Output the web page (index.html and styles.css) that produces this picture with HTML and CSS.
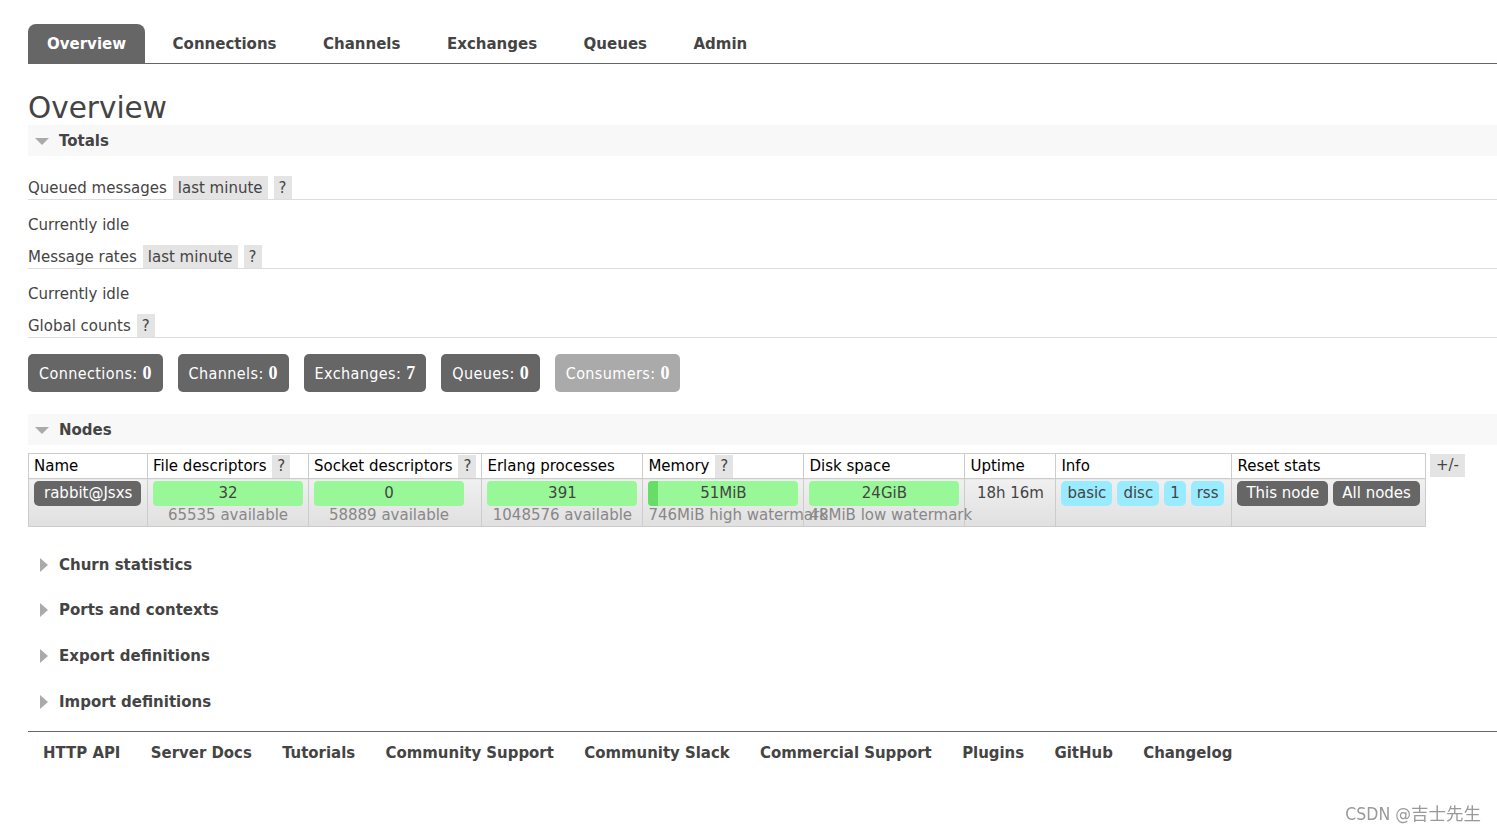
FILE: index.html
```html
<!DOCTYPE html>
<html>
<head>
<meta charset="utf-8">
<title>RabbitMQ Management</title>
<link rel="stylesheet" href="styles.css">
</head>
<body>
<div class="page">
  <ul class="tabs">
    <li class="tab active">Overview</li>
    <li class="tab">Connections</li>
    <li class="tab">Channels</li>
    <li class="tab">Exchanges</li>
    <li class="tab">Queues</li>
    <li class="tab">Admin</li>
  </ul>

  <h1 class="title">Overview</h1>

  <div class="section-head open"><span class="tri-down"></span>Totals</div>

  <div class="row-line"><span class="lbl">Queued messages</span><span class="chip">last minute</span><span class="chip q">?</span></div>
  <div class="idle">Currently idle</div>
  <div class="row-line"><span class="lbl">Message rates</span><span class="chip">last minute</span><span class="chip q">?</span></div>
  <div class="idle">Currently idle</div>
  <div class="row-line"><span class="lbl">Global counts</span><span class="chip q">?</span></div>

  <div class="counts">
    <span class="count">Connections: <b>0</b></span>
    <span class="count">Channels: <b>0</b></span>
    <span class="count">Exchanges: <b>7</b></span>
    <span class="count">Queues: <b>0</b></span>
    <span class="count light">Consumers: <b>0</b></span>
  </div>

  <div class="section-head nodes"><span class="tri-down"></span>Nodes</div>

  <div class="table-wrap">
    <table class="list">
      <thead>
        <tr>
          <th class="c-name">Name</th>
          <th class="c-fd">File descriptors <span class="th-q">?</span></th>
          <th class="c-sd">Socket descriptors <span class="th-q">?</span></th>
          <th class="c-ep">Erlang processes</th>
          <th class="c-mem">Memory <span class="th-q">?</span></th>
          <th class="c-disk">Disk space</th>
          <th class="c-up">Uptime</th>
          <th class="c-info">Info</th>
          <th class="c-reset">Reset stats</th>
        </tr>
      </thead>
      <tbody>
        <tr>
          <td><span class="node">rabbit@Jsxs</span></td>
          <td><div class="bar"><span class="bar-val">32</span></div><div class="sub">65535 available</div></td>
          <td><div class="bar"><span class="bar-val">0</span></div><div class="sub">58889 available</div></td>
          <td><div class="bar"><span class="bar-val">391</span></div><div class="sub">1048576 available</div></td>
          <td><div class="bar"><span class="bar-dark" style="width:10px"></span><span class="bar-val">51MiB</span></div><div class="sub">746MiB high watermark</div></td>
          <td><div class="bar"><span class="bar-val">24GiB</span></div><div class="sub">48MiB low watermark</div></td>
          <td class="uptime">18h 16m</td>
          <td><div class="badges"><span class="badge">basic</span><span class="badge">disc</span><span class="badge">1</span><span class="badge">rss</span></div></td>
          <td><div class="badges"><span class="btn">This node</span><span class="btn">All nodes</span></div></td>
        </tr>
      </tbody>
    </table>
    <span class="plusminus">+/-</span>
  </div>

  <div class="section-head closed first"><span class="tri-right"></span>Churn statistics</div>
  <div class="section-head closed"><span class="tri-right"></span>Ports and contexts</div>
  <div class="section-head closed"><span class="tri-right"></span>Export definitions</div>
  <div class="section-head closed"><span class="tri-right"></span>Import definitions</div>

  <ul class="footer">
    <li>HTTP API</li>
    <li>Server Docs</li>
    <li>Tutorials</li>
    <li>Community Support</li>
    <li>Community Slack</li>
    <li>Commercial Support</li>
    <li>Plugins</li>
    <li>GitHub</li>
    <li>Changelog</li>
  </ul>
</div>
<div class="watermark">CSDN @吉士先生</div>
</body>
</html>
```

FILE: styles.css
```css
html, body {
  margin: 0;
  padding: 0;
  background: #fff;
}
body {
  font-family: "DejaVu Sans", Verdana, sans-serif;
  font-size: 15px;
  color: #444;
}
.page {
  padding: 24px 0 0 28px;
}
.tabs {
  list-style: none;
  margin: 0;
  padding: 0;
  display: flex;
  height: 39px;
  border-bottom: 1px solid #666;
}
.tab {
  font-weight: bold;
  color: #444;
  padding: 2px 19px 0;
  margin-right: 8.5px;
  line-height: 37px;
  font-size: 15px;
}
.tab.active {
  background: #666;
  color: #fff;
  border-radius: 8px 8px 0 0;
}
.title {
  margin: 28px 0 0;
  font-size: 29.5px;
  font-weight: normal;
  line-height: 33px;
  color: #444;
}
.section-head {
  display: flex;
  align-items: center;
  height: 31px;
  background: #f8f8f8;
  font-weight: bold;
  color: #444;
  font-size: 15px;
}
.section-head.closed {
  background: transparent;
  margin-top: 14.8px;
}
.section-head.closed.first {
  margin-top: 22px;
}
.section-head.nodes {
  margin-top: 22px;
  height: 30px;
  padding-top: 1px;
}
.tri-down {
  width: 0;
  height: 0;
  border-left: 7px solid transparent;
  border-right: 7px solid transparent;
  border-top: 7px solid #aaa;
  margin: 1px 10px 0 7px;
}
.tri-right {
  width: 0;
  height: 0;
  border-top: 7px solid transparent;
  border-bottom: 7px solid transparent;
  border-left: 8px solid #aaa;
  margin: 0 11px 0 12px;
}
.row-line {
  display: flex;
  align-items: stretch;
  height: 23px;
  border-bottom: 1px solid #ddd;
  margin-top: 20px;
}
.row-line .lbl {
  padding-top: 2px;
  line-height: 21px;
  margin-right: 6px;
}
.chip {
  background: #e4e4e4;
  padding: 2px 5px 0;
  line-height: 21px;
  margin-right: 6px;
}
.idle + .row-line {
  margin-top: 0;
}
.idle {
  padding-top: 15px;
  line-height: 20px;
  margin-bottom: 10px;
}
.counts {
  display: flex;
  gap: 15px;
  margin-top: 16px;
}
.count {
  display: block;
  background: #666;
  color: #fff;
  border-radius: 5px;
  height: 38px;
  line-height: 38px;
  padding: 0 11px;
  font-family: "DejaVu Sans Condensed", "DejaVu Sans", sans-serif;
  font-size: 16px;
  letter-spacing: 0.4px;
}
.count b {
  font-family: "Liberation Serif", serif;
  font-weight: bold;
  font-size: 18px;
  letter-spacing: 0;
}
.count.light {
  background: #aaa;
}
.table-wrap {
  display: flex;
  align-items: flex-start;
  margin-top: 8px;
}
.list {
  border-collapse: collapse;
  font-size: 15px;
}
.list th {
  background: #fff;
  color: #000;
  font-weight: normal;
  text-align: left;
  border: 1px solid #ccc;
  padding: 1px 5px 0;
  height: 23px;
  line-height: 23px;
  white-space: nowrap;
  vertical-align: middle;
}
.th-q {
  display: inline-block;
  background: #e4e4e4;
  color: #444;
  padding: 0 5px;
  margin-left: 1px;
  line-height: 23px;
}
.c-name { width: 108px; }
.c-fd { width: 150px; }
.c-sd { width: 160px; }
.c-ep { width: 150px; }
.c-mem { width: 149px; }
.c-disk { width: 150px; }
.c-up { width: 80px; }
.c-info { width: 165px; }
.c-reset { width: 182px; }
.list td {
  border: 1px solid #ccc;
  background: linear-gradient(#f0f0f0, #e0e0e0);
  padding: 2px 5px 0;
  height: 45px;
  vertical-align: top;
  color: #444;
  white-space: nowrap;
}
.node {
  display: inline-block;
  background: #666;
  color: #fff;
  border-radius: 5px;
  padding: 0 9px 0 10px;
  line-height: 25px;
}
.bar {
  position: relative;
  width: 150px;
  height: 25px;
  background: #98f898;
  border-radius: 4px;
  overflow: hidden;
  text-align: center;
  line-height: 25px;
}
.bar-dark {
  position: absolute;
  left: 0;
  top: 0;
  bottom: 0;
  background: #66dd66;
}
.bar-val {
  position: relative;
}
.sub {
  width: 150px;
  text-align: center;
  white-space: nowrap;
  color: #888;
  line-height: 19px;
}
.list td.uptime {
  text-align: center;
  line-height: 25px;
}
.badges {
  display: flex;
  gap: 5px;
}
.badge {
  background: #99ebff;
  border-radius: 5px;
  padding: 0 6px;
  line-height: 25px;
  white-space: nowrap;
}
.btn {
  background: #666;
  color: #fff;
  border-radius: 5px;
  padding: 0 9px;
  line-height: 25px;
  white-space: nowrap;
}
.plusminus {
  display: block;
  margin: 1px 0 0 4px;
  background: #e4e4e4;
  color: #444;
  padding: 0 6px;
  line-height: 23px;
}
.footer {
  list-style: none;
  margin: 13.5px 0 0;
  padding: 0;
  border-top: 1px solid #666;
  display: flex;
}
.footer li {
  font-family: "DejaVu Sans Condensed", "DejaVu Sans", sans-serif;
  font-weight: bold;
  font-size: 16.6px;
  color: #444;
  padding: 1px 15.2px 0;
  line-height: 40px;
}
.footer li:first-child {
  padding-left: 15px;
}
.watermark {
  position: fixed;
  right: 16px;
  bottom: 8px;
  color: #999;
  font-family: "DejaVu Sans Condensed", "Noto Sans CJK SC", sans-serif;
  font-size: 17.5px;
}
```
